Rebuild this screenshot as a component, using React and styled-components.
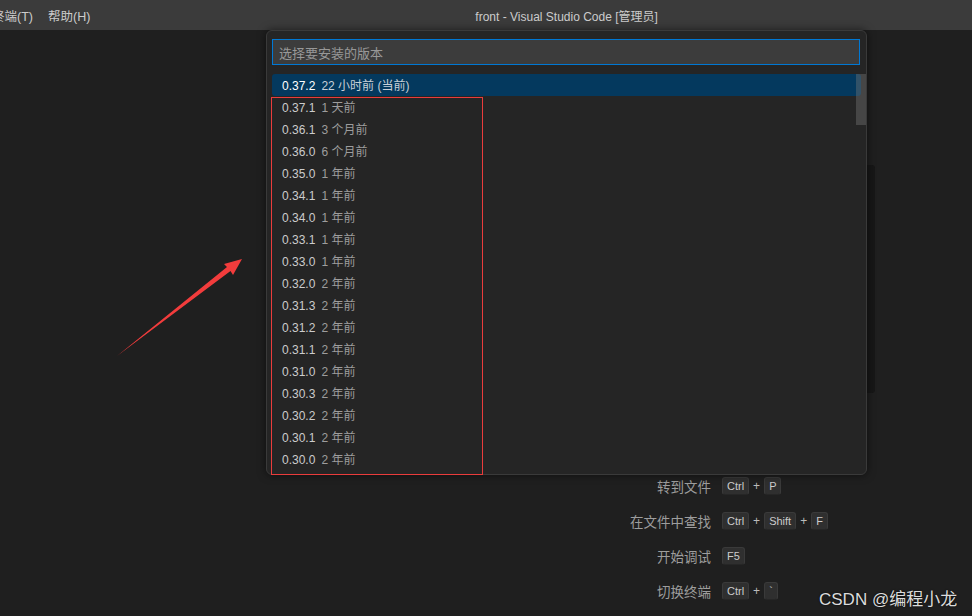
import React from "react";
import styled, { createGlobalStyle } from "styled-components";

const versions = [
  ["0.37.2", "22 小时前 (当前)"],
  ["0.37.1", "1 天前"],
  ["0.36.1", "3 个月前"],
  ["0.36.0", "6 个月前"],
  ["0.35.0", "1 年前"],
  ["0.34.1", "1 年前"],
  ["0.34.0", "1 年前"],
  ["0.33.1", "1 年前"],
  ["0.33.0", "1 年前"],
  ["0.32.0", "2 年前"],
  ["0.31.3", "2 年前"],
  ["0.31.2", "2 年前"],
  ["0.31.1", "2 年前"],
  ["0.31.0", "2 年前"],
  ["0.30.3", "2 年前"],
  ["0.30.2", "2 年前"],
  ["0.30.1", "2 年前"],
  ["0.30.0", "2 年前"],
];

const shortcuts = [
  { label: "转到文件", keys: ["Ctrl", "P"] },
  { label: "在文件中查找", keys: ["Ctrl", "Shift", "F"] },
  { label: "开始调试", keys: ["F5"] },
  { label: "切换终端", keys: ["Ctrl", "`"] },
];

const App = () => {
  return (
    <>
      <GlobalStyle />
      <Window>
        <TitleBar>
          <Menu>
            <MenuItem>终端(T)</MenuItem>
            <MenuItem>帮助(H)</MenuItem>
          </Menu>
          <Title>front - Visual Studio Code [管理员]</Title>
        </TitleBar>
        <Main>
          <Backdrop />
          <Shortcuts>
            {shortcuts.map((s) => (
              <ShortcutRow key={s.label}>
                <ShortcutLabel>{s.label}</ShortcutLabel>
                <Keys>
                  {s.keys.map((k, i) => (
                    <React.Fragment key={k + i}>
                      {i > 0 && <Plus>+</Plus>}
                      <Key>{k}</Key>
                    </React.Fragment>
                  ))}
                </Keys>
              </ShortcutRow>
            ))}
          </Shortcuts>

          <QuickPick>
            <SearchBox>选择要安装的版本</SearchBox>
            <List>
              {versions.map(([v, d], i) => (
                <Row key={v} selected={i === 0}>
                  <Version selected={i === 0}>{v}</Version>
                  <Desc selected={i === 0}>{d}</Desc>
                </Row>
              ))}
              <Scrollbar />
            </List>
          </QuickPick>

          <Highlight />
          <Arrow width="140" height="115" viewBox="0 0 140 115">
            <polygon
              points="7,106 117,17 114,14 132,9 123,25 120.5,21"
              fill="#f23c3c"
            />
          </Arrow>
          <Watermark>CSDN @编程小龙</Watermark>
        </Main>
      </Window>
    </>
  );
};

export default App;

const GlobalStyle = createGlobalStyle`
  html, body {
    margin: 0;
    padding: 0;
    background: #1f1f1f;
    font-family: "Liberation Sans", "Noto Sans CJK SC", sans-serif;
  }
`;

const Window = styled.div`
  width: 972px;
  height: 616px;
  overflow: hidden;
  display: flex;
  flex-direction: column;
  background: #1f1f1f;
`;

const TitleBar = styled.div`
  height: 30px;
  flex-shrink: 0;
  background: #3b3b3b;
  display: flex;
  align-items: center;
  position: relative;
  color: #cccccc;
  font-size: 12.5px;
`;

const Menu = styled.div`
  display: flex;
  gap: 15px;
  margin-left: -8px;
`;

const MenuItem = styled.span`
  color: #cccccc;
`;

const Title = styled.span`
  margin-left: 385px;
  font-size: 12px;
  color: #cccccc;
`;

const Main = styled.div`
  position: relative;
  flex: 1;
`;

const Backdrop = styled.div`
  position: absolute;
  left: 600px;
  top: 135px;
  width: 275px;
  height: 228px;
  background: #171717;
  border-radius: 0 3px 3px 0;
`;

const Shortcuts = styled.div`
  position: relative;
  padding-top: 438px;
  display: grid;
  grid-template-columns: 711px auto;
  column-gap: 11px;
`;

const ShortcutRow = styled.div`
  display: contents;
`;

const ShortcutLabel = styled.div`
  height: 35px;
  display: flex;
  align-items: center;
  justify-content: flex-end;
  color: #9d9d9d;
  font-size: 13.5px;
`;

const Keys = styled.div`
  height: 35px;
  display: flex;
  align-items: center;
  gap: 4px;
`;

const Key = styled.span`
  height: 18px;
  padding: 0 4px;
  display: inline-flex;
  align-items: center;
  box-sizing: border-box;
  background: #2f2f2f;
  border: 1px solid #3a3a3a;
  border-bottom-color: #262626;
  border-radius: 3px;
  color: #cccccc;
  font-size: 11px;
`;

const Plus = styled.span`
  color: #bbbbbb;
  font-size: 12px;
`;

const QuickPick = styled.div`
  position: absolute;
  left: 266px;
  top: 0;
  width: 601px;
  height: 445px;
  box-sizing: border-box;
  background: #252525;
  border: 1px solid #3a3a3a;
  border-radius: 6px;
  box-shadow: 0 0 8px rgba(0, 0, 0, 0.55);
  padding: 8px 6px 0 5px;
`;

const SearchBox = styled.div`
  height: 26px;
  box-sizing: border-box;
  border: 1px solid #0078d4;
  background: #3c3c3c;
  color: #989898;
  font-size: 13px;
  display: flex;
  align-items: center;
  padding-left: 6px;
`;

const List = styled.div`
  position: relative;
  margin-top: 9px;
`;

const Row = styled.div`
  height: 22px;
  line-height: 24px;
  display: flex;
  align-items: baseline;
  gap: 6px;
  padding-left: 10px;
  margin-right: -1px;
  border-radius: 3px;
  background: ${(p) => (p.selected ? "#04395e" : "transparent")};
  font-size: 12px;
`;

const Version = styled.span`
  color: ${(p) => (p.selected ? "#ffffff" : "#cccccc")};
`;

const Desc = styled.span`
  color: ${(p) => (p.selected ? "#c8d0d8" : "#9d9d9d")};
`;

const Scrollbar = styled.div`
  position: absolute;
  right: -6px;
  top: 0;
  width: 10px;
  height: 51px;
  background: rgba(121, 121, 121, 0.4);
`;

const Highlight = styled.div`
  position: absolute;
  left: 271px;
  top: 67px;
  width: 212px;
  height: 378px;
  box-sizing: border-box;
  border: 1px solid #ea3c3c;
`;

const Arrow = styled.svg`
  position: absolute;
  left: 110px;
  top: 220px;
`;

const Watermark = styled.div`
  position: absolute;
  left: 819px;
  top: 555px;
  color: #dcdcdc;
  font-size: 17px;
  text-shadow: 0 0 2px rgba(0, 0, 0, 0.8);
`;
